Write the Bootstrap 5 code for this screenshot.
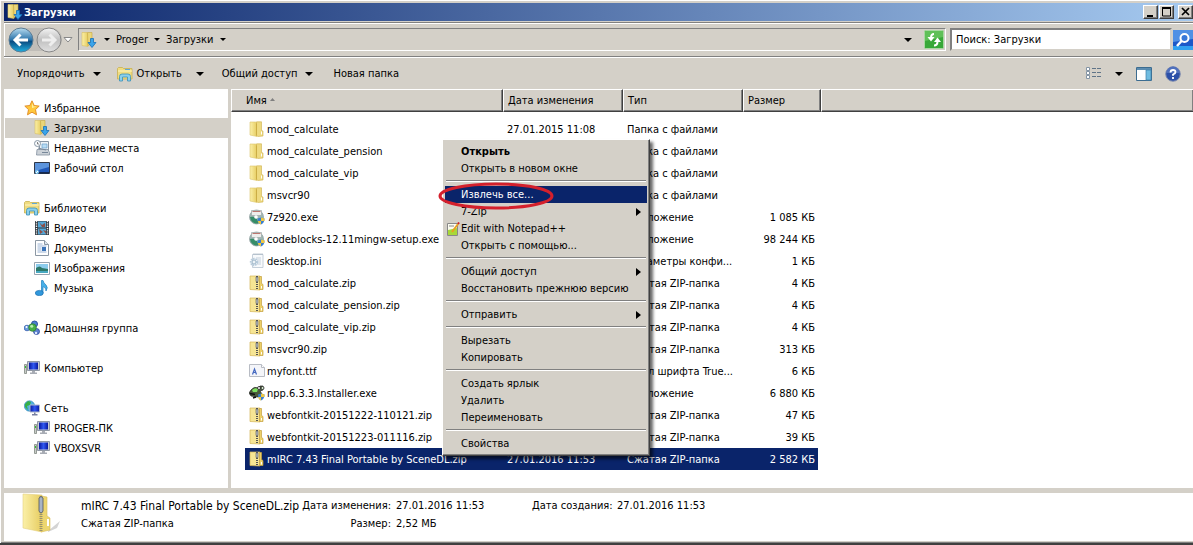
<!DOCTYPE html>
<html lang="ru">
<head>
<meta charset="utf-8">
<meta name="viewport" content="width=device-width, initial-scale=1">
<title>Загрузки</title>
<link href="https://cdn.jsdelivr.net/npm/bootstrap@5.3.0/dist/css/bootstrap.min.css" rel="stylesheet">
<style>
:root { --face: #d4d0c8; --navy: #0a246a; --shade: #808080; --dark: #404040; }
body { font-family: "DejaVu Sans Condensed", "DejaVu Sans", sans-serif; font-size: 11px; line-height: 17px; color: #000; background: var(--face); }
button { font: inherit; color: inherit; }
svg { display: block; flex: none; }
.win { min-height: 100vh; border-bottom: 2px solid var(--dark); box-shadow: inset 1px 1px #fff, inset 0 -1px var(--shade); padding: 3px 0 2px 4px; overflow: hidden; }
.titlebar { height: 18px; background: linear-gradient(90deg, #0a246a, #a6caf0); color: #fff; font-weight: bold; padding-left: 3px; gap: 1px; }
.cap { width: 15px; height: 14px; padding: 0; background: var(--face); border: 1px solid; border-color: #fff var(--dark) var(--dark) #fff; box-shadow: inset -1px -1px var(--shade); }
.cap.shut { margin-left: 3px; }
.navrow { height: 35px; margin-top: 1px; border-top: 1px solid var(--shade); border-bottom: 1px solid var(--shade); box-shadow: inset 1px 1px #fff, 0 1px #fff; padding-left: 4px; }
.plain { background: none; border: 0; padding: 0; }
.address { height: 23px; border: 1px solid; border-color: var(--shade) #fff #fff var(--shade); padding: 0 1px 0 2px; margin-left: 5px; }
.crumbs { gap: 6px; margin-left: 7px; }
.search { width: 222px; height: 23px; margin: 0 1px 0 4px; border: 2px solid; border-color: var(--shade) var(--face) var(--face) var(--shade); padding: 0 4px; background: #fff; font: inherit; color: #000; outline: 0; }
.search::placeholder { color: #000; opacity: 1; }
.tools { height: 31px; margin-top: 1px; padding: 0 12px 0 13px; }
.open-cmd { margin: 0 14px 0 16px; gap: 4px; }
.share-cmd { margin: 0 20px 0 18px; }
.view-cmds { gap: 13px; }
.side { width: 224px; background: #fff; padding-top: 9px; margin-right: 3px; }
.side a { color: #000; text-decoration: none; height: 20px; gap: 4px; padding-left: 19px; margin-left: 1px; }
.side a.sub { padding-left: 29px; }
.side a.current { background: var(--face); }
.side nav { margin-bottom: 20px; }
.files { background: #fff; min-width: 0; }
.files table { table-layout: fixed; width: 100%; border-collapse: separate; border-spacing: 0; }
.files th { height: 23px; font-weight: normal; background: var(--face); border: 1px solid; border-color: #fff var(--dark) var(--dark) #fff; box-shadow: inset -1px -1px var(--shade); padding: 0 4px; }
.files th:first-child { padding-left: 14px; }
.files th:last-child { border-right: 0; }
.files td { height: 22px; padding: 0 4px; white-space: nowrap; overflow: hidden; }
.files td.num { text-align: right; padding: 0; }
.files .head-gap td { height: 6px; }
.files tr.chosen td:not(:first-child):not(:nth-last-child(-n+2)) { background: var(--navy); color: #fff; }
.fname { gap: 2px; }
.c-pad { width: 14px; } .c-name { width: 258px; } .c-col { width: 120px; } .c-size { width: 69px; } .c-end { width: 3px; }
.ctx { position: absolute; left: 211px; top: 50px; width: 208px; padding: 3px 2px; background: var(--face); border: 1px solid; border-color: #fff var(--dark) var(--dark) #fff; box-shadow: inset -1px -1px var(--shade), inset 1px 1px var(--face), 3px 3px 3px rgba(0,0,0,.6); z-index: 5; }
.ctx button { display: flex; align-items: center; width: 100%; height: 17px; padding: 0 6px 0 2px; border: 0; background: none; text-align: left; }
.ctx button.hot { background: var(--navy); color: #fff; }
.ctx .ico { width: 14px; flex: none; }
.ctx hr { margin: 3px 1px 4px; border: 0; border-top: 1px solid var(--shade); border-bottom: 1px solid #fff; height: 2px; opacity: 1; }
.ring { position: absolute; left: -5px; top: 42px; z-index: 6; pointer-events: none; }
.details { background: #fff; margin-top: 5px; height: 48px; padding-left: 17px; gap: 12px; }
.facts { display: grid; grid-template-columns: 215px 90px 131px 80px auto; column-gap: 5px; grid-auto-rows: 18px; align-content: start; padding-top: 4px; white-space: nowrap; }
.facts dt, .facts dd { margin: 0; font-weight: normal; line-height: 18px; }
.facts dt { text-align: right; }
.big { font-size: 12px; }
</style>
</head>
<body>
<svg width="0" height="0" class="position-absolute" aria-hidden="true">
<defs>
<linearGradient id="gy" x2="1"><stop offset="0" stop-color="#fbf0a8"/><stop offset="1" stop-color="#e6cc60"/></linearGradient>
<linearGradient id="gb" x2="0" y2="1"><stop offset="0" stop-color="#b8dcf0"/><stop offset=".5" stop-color="#2a72a8"/><stop offset=".55" stop-color="#0a4a80"/><stop offset="1" stop-color="#20b0e0"/></linearGradient>
<linearGradient id="gg" x2="0" y2="1"><stop offset="0" stop-color="#f4f4f4"/><stop offset=".5" stop-color="#c0c0c0"/><stop offset="1" stop-color="#e0e0e0"/></linearGradient>
<linearGradient id="gs" x2="1"><stop offset="0" stop-color="#0818a0"/><stop offset=".5" stop-color="#3058f0"/><stop offset="1" stop-color="#0818a0"/></linearGradient>
<symbol id="folder" viewBox="0 0 16 16"><path d="M1 1h5.500l1.500 1v13.500L1 14z" fill="url(#gy)" stroke="#dcc468" stroke-width=".6"/><path d="M7.500.800h5v8.700l1.500.5v5l-5 .5-1.500-1z" fill="#eeda80" stroke="#ceb04c" stroke-width=".6"/><path d="M7.500 2.500v12" stroke="#c8a840" stroke-width=".8"/><path d="M12.500 10.500v3" stroke="#fff"/></symbol>
<symbol id="down" viewBox="0 0 16 16"><path d="M1 .500h5l1 1v13l-6-1z" fill="url(#gy)" stroke="#d8bf60" stroke-width=".6"/><path d="M6.500.500H11v11l-4 2z" fill="#ead67a" stroke="#c8a840" stroke-width=".6"/><path d="M9.500 6.500h3v4h2.500L11 15.500 7 10.500h2.500z" fill="#3aa4ea" stroke="#1670b8" stroke-width=".8"/></symbol>
<symbol id="zip" viewBox="0 0 16 16"><path d="M1 1h10v14l-10-.5z" fill="#f6e594" stroke="#d4b458" stroke-width=".7"/><path d="M10.500 1.500h2v7l1.500 1v5h-3.500z" fill="#edd068" stroke="#c4a040" stroke-width=".7"/><path d="M8 1v14" stroke="#555" stroke-width="2" stroke-dasharray="1 1"/><path d="M7 2h2v4.500h-2z" fill="#b8c0c8" stroke="#555" stroke-width=".6"/><path d="M12.500 11v2.500" stroke="#fff"/></symbol>
<symbol id="setup" viewBox="0 0 16 16"><circle cx="7.500" cy="8" r="7" fill="#9cb8b4" stroke="#8a9a9a" stroke-width=".7"/><path d="M1 8a6 6 0 0 1 8 6.500A7 7 0 0 1 1 8z" fill="#358c68"/><path d="M2.500 1.500h10v5h-10z" fill="#eceeec" stroke="#9ca8a8" stroke-width=".7"/><path d="M3.500 2.500h8" stroke="#b05850" stroke-width=".8"/><circle cx="7" cy="8" r="1.800" fill="#fff"/><path d="M8.500 9.500 12 8.500l3.500 1c0 3-1 5-3.500 6-2.500-1-3.500-3-3.500-6z" fill="#3a7ed0"/><path d="M12 8.500l3.500 1V12H12zM12 12v3.500c-1.700-.7-2.700-1.800-3.200-3.500z" fill="#f0c840"/></symbol>
<symbol id="ini" viewBox="0 0 16 16"><path d="M3.500 1.500h10.500v13h-10.500z" fill="#f8fafc" stroke="#b8c4d0" stroke-width=".8"/><path d="M4.500 1h9" stroke="#8898a8" stroke-dasharray="1 1"/><path d="M7 5h5M8 7h4M8 9h4M8 11h4" stroke="#c4d0dc"/><circle cx="5" cy="9" r="3.200" fill="none" stroke="#b8ccdc" stroke-width="2" stroke-dasharray="1.500 .8"/><circle cx="5" cy="9" r="2" fill="#eef4f8" stroke="#9eb6c8"/></symbol>
<symbol id="ttf" viewBox="0 0 16 16"><path d="M.5 1.500h12l3 3v9H.5z" fill="#f4f5f9" stroke="#b8bcc4"/><path d="M12.500 1.500v3h3" fill="#fff" stroke="#b8bcc4"/><path d="M3.500 11.500 5.500 6l2 5.500M4.200 9.500h2.600" fill="none" stroke="#4468c0" stroke-width="1.200"/></symbol>
<symbol id="npp" viewBox="0 0 16 16"><path d="M2 5q3-4 7-2l2-2h3v4l-3 1 2 3-4 3-7-1-2-3z" fill="#4a5a3a" stroke="#222" stroke-width=".7"/><path d="M3 5q3-3 6-1l-1 3H4z" fill="#7ee060"/><circle cx="10" cy="3" r="1.500" fill="#fff" stroke="#222" stroke-width=".8"/><circle cx="13.500" cy="3" r="1.500" fill="#d8f0d0" stroke="#222" stroke-width=".8"/><path d="M1 8.500l5 1M4 13l3-1" stroke="#111" stroke-width="1.500"/><path d="M9 9.500l3-1 3.500 1c0 3-1 5-3.500 6-2-1-3-3-3-6z" fill="#3a7ed0"/><path d="M12 8.500l3.500 1V12H12zM12 12v3.500c-1.700-.7-2.400-1.800-2.800-3.500z" fill="#f0c840"/></symbol>
<symbol id="star" viewBox="0 0 16 16"><path d="M8 .8l2.200 4.700 5 .6-3.700 3.500 1 5.200L8 12.200l-4.500 2.600 1-5.200L.8 6.100l5-.6z" fill="#ffc83c" stroke="#e08820" stroke-width=".9"/><path d="M8 3l1.500 3.500H13L8 8z" fill="#fff0a0"/></symbol>
<symbol id="lib" viewBox="0 0 16 16"><path d="M.5 2.500l1-1h4l1 1h8.500v10.500H.5z" fill="#f0dc80" stroke="#c8b050" stroke-width=".8"/><path d="M1 5h14" stroke="#fff6c0"/><path d="M8 3.500h5" stroke="#60a8d8"/><path d="M2.500 15v-4.500q0-2.500 2.500-2.500h6q2.500 0 2.500 2.500V15h-3v-4h-5v4z" fill="#8cd0ec" stroke="#3a90b8" stroke-width=".8"/></symbol>
<symbol id="recent" viewBox="0 0 16 16"><path d="M5.500 1.500h9v9h-9z" fill="#eef3f7" stroke="#8896a4"/><path d="M8 4h5v4H8z" fill="#b8dcf4" stroke="#6aa0cc" stroke-width=".7"/><path d="M3 9.500h11l1.500 3v2.500h-13z" fill="#ccd2d8" stroke="#8490a0" stroke-width=".8"/><path d="M4 8l8 2M8 12.500h6" stroke="#78889a"/><circle cx="3.500" cy="3.500" r="3" fill="#f8fafc" stroke="#8896a4"/><path d="M3.500 2v2H5" fill="none" stroke="#555" stroke-width=".7"/></symbol>
<symbol id="desk" viewBox="0 0 16 16"><path d="M.5 2.500h15v11H.5z" fill="#2058b8" stroke="#303848"/><path d="M1 3h14v4L1 11z" fill="#5c94dc"/><path d="M1 12.800h14" stroke="#16284c" stroke-width="1.500"/><circle cx="3" cy="12" r="2" fill="#80c8f0"/><path d="M2 13l2-2" stroke="#fff"/></symbol>
<symbol id="video" viewBox="0 0 16 16"><path d="M1 1h14v14H1z" fill="#303840"/><path d="M4 1.500h8v6H4zM4 8.500h8v6H4z" fill="#54a8d8"/><path d="M5 2l3 3 3-2v4H8zM5 9l4 3-3 2zM9 10l3 1v3z" fill="#8c5048"/><path d="M2.500 1v14M13.500 1v14" stroke="#f0f0f0" stroke-width="1.400" stroke-dasharray="1.300 1"/></symbol>
<symbol id="doc" viewBox="0 0 16 16"><path d="M1.500.5h9l4 4v11h-13z" fill="#fff" stroke="#8c98a4"/><path d="M10.500.5v4h4" fill="#dce4ec" stroke="#8c98a4"/><path d="M3.500 4h5M3.500 6h9M3.500 8h4M3.500 10h4M3.500 12h9" stroke="#9cb4d4"/><path d="M8 7h4v4H8z" fill="#3c74b8"/></symbol>
<symbol id="pic" viewBox="0 0 16 16"><path d="M.5 2.500h15v12H.5z" fill="#fff" stroke="#98a4b0"/><path d="M2 4h12v9H2z" fill="#8cccec"/><path d="M2 8q4-3 6 0l6 1v2H2z" fill="#2c7868"/><path d="M2 11h12v2H2z" fill="#48a8c0"/></symbol>
<symbol id="note" viewBox="0 0 16 16"><path d="M7.500 0.500h1.500q.5 2.500 3 4.500 2.500 2.500 0 6 .5-3-3-4.500V13H7.500z" fill="#48b0e8" stroke="#2080c0" stroke-width=".7"/><ellipse cx="5.300" cy="13" rx="4" ry="2.600" fill="#3098dc" stroke="#1c70b0" stroke-width=".7"/></symbol>
<symbol id="home" viewBox="0 0 16 16"><circle cx="10.500" cy="4" r="3" fill="#4c80d0" stroke="#2c50a0"/><circle cx="3" cy="8" r="2.800" fill="#6c9cdc" stroke="#3860b0" stroke-width=".8"/><circle cx="12.500" cy="11.500" r="3" fill="#5c80d0" stroke="#2c4898" stroke-width=".8"/><circle cx="8.500" cy="7.500" r="3.800" fill="#48b048" stroke="#2c7c38" stroke-width=".8"/><circle cx="7.700" cy="6.300" r="1.500" fill="#b8ecb0"/><circle cx="2.500" cy="7" r="1" fill="#fff"/><circle cx="12" cy="13" r="1.200" fill="#dce8fc"/></symbol>
<symbol id="pc" viewBox="0 0 16 16"><path d="M.5 4.500h2v9h-2z" fill="#c8ccc8" stroke="#808880" stroke-width=".8"/><path d="M1 6h1v2H1z" fill="#30c030"/><path d="M3.500 1.500h12v9h-12z" fill="#c8ccd4" stroke="#9098a4"/><path d="M5 2.500h9v7H5z" fill="url(#gs)"/><path d="M8 11h3v1.500h2v1.500H6v-1.500h2z" fill="#a8acb4"/></symbol>
<symbol id="net" viewBox="0 0 16 16"><circle cx="5.500" cy="6" r="5.200" fill="#50b0e0" stroke="#2880b0" stroke-width=".6"/><path d="M1 4l3-3 3 1-1 3-3 1 1 4-3-3zM7 7l3-1v4H7z" fill="#38b048"/><path d="M6 5h9.500v7H6z" fill="url(#gs)" stroke="#b0b8c8"/><path d="M10 12.500h1.500V14h2v1.500H8V14h2z" fill="#7880a0"/></symbol>
<symbol id="tri" viewBox="0 0 8 4"><path d="M0 0h8L4 4z"/></symbol>
<symbol id="rtri" viewBox="0 0 5 8"><path d="M0 0l5 4-5 4z"/></symbol>
</defs>
</svg>

<div class="win d-flex flex-column">
  <header class="titlebar d-flex align-items-center">
    <svg width="16" height="16"><use href="#down"/></svg>
    <span class="flex-grow-1">Загрузки</span>
    <button class="cap" aria-label="Свернуть"><svg width="13" height="12"><path d="M3 9h6v2H3z"/></svg></button>
    <button class="cap" aria-label="Развернуть"><svg width="13" height="12"><path d="M2.500 2v8h8V2z" fill="none" stroke="#000"/><path d="M2 2h9" stroke="#000" stroke-width="2"/></svg></button>
    <button class="cap shut" aria-label="Закрыть"><svg width="13" height="12"><path d="M3 2l7 7M10 2L3 9" stroke="#000" stroke-width="1.700"/></svg></button>
  </header>

  <div class="navrow d-flex align-items-center">
    <button class="plain" aria-label="Назад и вперёд"><svg width="55" height="28"><rect x="4" y="2" width="50" height="23" rx="11" fill="#c0bdb8"/><circle cx="13" cy="14" r="12" fill="url(#gb)" stroke="#5c7c94"/><path d="M20 14H7M12.500 8.500L7 14l5.500 5.500" stroke="#fff" stroke-width="3" fill="none"/><circle cx="41" cy="14" r="12" fill="url(#gg)" stroke="#888"/><path d="M34 14h13M41.500 8.500L47 14l-5.500 5.500" stroke="#eee" stroke-width="3" fill="none"/></svg></button>
    <button class="plain" aria-label="Журнал"><svg width="10" height="6"><path d="M1 .5h8L5 5z" fill="#fff" stroke="#888"/></svg></button>
    <nav class="address d-flex align-items-center flex-grow-1" aria-label="Адрес">
      <svg width="16" height="16"><use href="#down"/></svg>
      <div class="crumbs d-flex align-items-center">
        <svg width="6" height="3"><use href="#tri"/></svg>
        <button class="plain">Proger</button>
        <svg width="6" height="3"><use href="#tri"/></svg>
        <button class="plain">Загрузки</button>
        <svg width="6" height="3"><use href="#tri"/></svg>
      </div>
      <svg class="ms-auto me-2" width="8" height="4"><use href="#tri"/></svg>
      <button class="plain ms-1" aria-label="Обновить"><svg width="20" height="19"><rect x=".5" y=".5" width="19" height="18" rx="1" fill="#38a838" stroke="#a8d8a0"/><path d="M1 1h18v6L1 11z" fill="#60c058"/><path d="M10 4Q7 4 7 8" fill="none" stroke="#fff" stroke-width="2"/><path d="M3.500 7h7L7 11.500z" fill="#fff"/><path d="M10 15.500q3.500 0 3.500-4" fill="none" stroke="#fff" stroke-width="2"/><path d="M10 12h7l-3.500-4.500z" fill="#fff"/></svg></button>
    </nav>
    <input class="search" type="search" placeholder="Поиск: Загрузки" aria-label="Поиск">
    <button class="plain" aria-label="Найти"><svg width="20" height="20"><rect width="20" height="20" rx="1" fill="#1c58c8"/><path d="M0 0h20v9L0 12z" fill="#5090e4"/><path d="M0 16h20v4H0z" fill="#30a0f0"/><circle cx="11.500" cy="8" r="4" fill="#3878d8" stroke="#fff" stroke-width="2"/><path d="M8.500 11L4 16" stroke="#fff" stroke-width="2.500"/></svg></button>
  </div>

  <div class="tools d-flex align-items-center">
    <button class="plain d-flex align-items-center gap-2">Упорядочить<svg width="8" height="4"><use href="#tri"/></svg></button>
    <button class="plain d-flex align-items-center open-cmd"><svg width="16" height="16"><use href="#lib"/></svg>Открыть</button>
    <button class="plain" aria-label="Ещё"><svg width="8" height="4"><use href="#tri"/></svg></button>
    <button class="plain d-flex align-items-center gap-2 share-cmd">Общий доступ<svg width="8" height="4"><use href="#tri"/></svg></button>
    <button class="plain me-auto">Новая папка</button>
    <div class="view-cmds d-flex align-items-center">
      <button class="plain" aria-label="Вид"><svg width="16" height="13"><path d="M.5.500h3v3h-3zM.5 4.500h3v3h-3zM.5 8.500h3v3h-3z" fill="#fff" stroke="#8494a4"/><path d="M6 1.500h4M11 1.500h4M6 5.500h4M11 5.500h4M6 9.500h4M11 9.500h4" stroke="#607488"/></svg></button>
      <button class="plain" aria-label="Выбор вида"><svg width="8" height="4"><use href="#tri"/></svg></button>
      <button class="plain" aria-label="Область просмотра"><svg width="16" height="14"><path d="M.5.500h15v13H.5z" fill="#fff" stroke="#3c6c90"/><path d="M1 2h14" stroke="#5c8cb0" stroke-width="2"/><path d="M10 3h5v10h-5z" fill="#70bce0" stroke="#3c80a8" stroke-width=".7"/></svg></button>
      <button class="plain" aria-label="Справка"><svg width="16" height="16"><circle cx="8" cy="8" r="7.300" fill="#2c50a8" stroke="#8490b0"/><path d="M1.500 7a6.500 6.500 0 0 1 13 0z" fill="#5070bc"/><path d="M5.500 6.500q0-2.500 2.500-2.500t2.500 2Q10.500 7.500 8 8.500v1.200M8 11v2" fill="none" stroke="#fff" stroke-width="1.800"/></svg></button>
    </div>
  </div>

  <div class="d-flex flex-grow-1">
    <aside class="side flex-shrink-0">
      <nav><a href="#" class="d-flex align-items-center"><svg width="16" height="16"><use href="#star"/></svg>Избранное</a>
        <a href="#" class="d-flex align-items-center sub current"><svg width="16" height="16"><use href="#down"/></svg>Загрузки</a>
        <a href="#" class="d-flex align-items-center sub"><svg width="16" height="16"><use href="#recent"/></svg>Недавние места</a>
        <a href="#" class="d-flex align-items-center sub"><svg width="16" height="16"><use href="#desk"/></svg>Рабочий стол</a></nav>
      <nav><a href="#" class="d-flex align-items-center"><svg width="16" height="16"><use href="#lib"/></svg>Библиотеки</a>
        <a href="#" class="d-flex align-items-center sub"><svg width="16" height="16"><use href="#video"/></svg>Видео</a>
        <a href="#" class="d-flex align-items-center sub"><svg width="16" height="16"><use href="#doc"/></svg>Документы</a>
        <a href="#" class="d-flex align-items-center sub"><svg width="16" height="16"><use href="#pic"/></svg>Изображения</a>
        <a href="#" class="d-flex align-items-center sub"><svg width="16" height="16"><use href="#note"/></svg>Музыка</a></nav>
      <nav><a href="#" class="d-flex align-items-center"><svg width="16" height="16"><use href="#home"/></svg>Домашняя группа</a></nav>
      <nav><a href="#" class="d-flex align-items-center"><svg width="16" height="16"><use href="#pc"/></svg>Компьютер</a></nav>
      <nav><a href="#" class="d-flex align-items-center"><svg width="16" height="16"><use href="#net"/></svg>Сеть</a>
        <a href="#" class="d-flex align-items-center sub"><svg width="16" height="16"><use href="#pc"/></svg>PROGER-ПК</a>
        <a href="#" class="d-flex align-items-center sub"><svg width="16" height="16"><use href="#pc"/></svg>VBOXSVR</a></nav>
    </aside>

    <main class="files flex-grow-1 position-relative">
      <table>
        <colgroup><col class="c-pad"><col class="c-name"><col class="c-col"><col class="c-col"><col class="c-size"><col class="c-end"><col class="c-end"><col class="c-end"><col></colgroup>
        <thead><tr><th colspan="2">Имя <svg class="d-inline-block align-middle mb-1 ms-px" width="5" height="3"><path d="M0 3h5L2.500 0z" fill="#808080"/></svg></th><th>Дата изменения</th><th>Тип</th><th colspan="4">Размер</th><th></th></tr></thead>
        <tbody>
        <tr class="head-gap"><td colspan="9"></td></tr>
        <tr><td></td><td><div class="fname d-flex align-items-center"><svg width="16" height="16"><use href="#folder"/></svg>mod_calculate</div></td><td>27.01.2015 11:08</td><td>Папка с файлами</td><td class="num" colspan="2"></td><td></td><td></td><td></td></tr>
        <tr><td></td><td><div class="fname d-flex align-items-center"><svg width="16" height="16"><use href="#folder"/></svg>mod_calculate_pension</div></td><td></td><td>Папка с файлами</td><td class="num" colspan="2"></td><td></td><td></td><td></td></tr>
        <tr><td></td><td><div class="fname d-flex align-items-center"><svg width="16" height="16"><use href="#folder"/></svg>mod_calculate_vip</div></td><td></td><td>Папка с файлами</td><td class="num" colspan="2"></td><td></td><td></td><td></td></tr>
        <tr><td></td><td><div class="fname d-flex align-items-center"><svg width="16" height="16"><use href="#folder"/></svg>msvcr90</div></td><td></td><td>Папка с файлами</td><td class="num" colspan="2"></td><td></td><td></td><td></td></tr>
        <tr><td></td><td><div class="fname d-flex align-items-center"><svg width="16" height="16"><use href="#setup"/></svg>7z920.exe</div></td><td></td><td>Приложение</td><td class="num" colspan="2">1 085 КБ</td><td></td><td></td><td></td></tr>
        <tr><td></td><td><div class="fname d-flex align-items-center"><svg width="16" height="16"><use href="#setup"/></svg>codeblocks-12.11mingw-setup.exe</div></td><td></td><td>Приложение</td><td class="num" colspan="2">98 244 КБ</td><td></td><td></td><td></td></tr>
        <tr><td></td><td><div class="fname d-flex align-items-center"><svg width="16" height="16"><use href="#ini"/></svg>desktop.ini</div></td><td></td><td>Параметры конфи...</td><td class="num" colspan="2">1 КБ</td><td></td><td></td><td></td></tr>
        <tr><td></td><td><div class="fname d-flex align-items-center"><svg width="16" height="16"><use href="#zip"/></svg>mod_calculate.zip</div></td><td></td><td>Сжатая ZIP-папка</td><td class="num" colspan="2">4 КБ</td><td></td><td></td><td></td></tr>
        <tr><td></td><td><div class="fname d-flex align-items-center"><svg width="16" height="16"><use href="#zip"/></svg>mod_calculate_pension.zip</div></td><td></td><td>Сжатая ZIP-папка</td><td class="num" colspan="2">4 КБ</td><td></td><td></td><td></td></tr>
        <tr><td></td><td><div class="fname d-flex align-items-center"><svg width="16" height="16"><use href="#zip"/></svg>mod_calculate_vip.zip</div></td><td></td><td>Сжатая ZIP-папка</td><td class="num" colspan="2">4 КБ</td><td></td><td></td><td></td></tr>
        <tr><td></td><td><div class="fname d-flex align-items-center"><svg width="16" height="16"><use href="#zip"/></svg>msvcr90.zip</div></td><td></td><td>Сжатая ZIP-папка</td><td class="num" colspan="2">313 КБ</td><td></td><td></td><td></td></tr>
        <tr><td></td><td><div class="fname d-flex align-items-center"><svg width="16" height="16"><use href="#ttf"/></svg>myfont.ttf</div></td><td></td><td>Файл шрифта True...</td><td class="num" colspan="2">6 КБ</td><td></td><td></td><td></td></tr>
        <tr><td></td><td><div class="fname d-flex align-items-center"><svg width="16" height="16"><use href="#npp"/></svg>npp.6.3.3.Installer.exe</div></td><td></td><td>Приложение</td><td class="num" colspan="2">6 880 КБ</td><td></td><td></td><td></td></tr>
        <tr><td></td><td><div class="fname d-flex align-items-center"><svg width="16" height="16"><use href="#zip"/></svg>webfontkit-20151222-110121.zip</div></td><td></td><td>Сжатая ZIP-папка</td><td class="num" colspan="2">47 КБ</td><td></td><td></td><td></td></tr>
        <tr><td></td><td><div class="fname d-flex align-items-center"><svg width="16" height="16"><use href="#zip"/></svg>webfontkit-20151223-011116.zip</div></td><td></td><td>Сжатая ZIP-папка</td><td class="num" colspan="2">39 КБ</td><td></td><td></td><td></td></tr>
        <tr class="chosen"><td></td><td><div class="fname d-flex align-items-center"><svg width="16" height="16"><use href="#zip"/></svg>mIRC 7.43 Final Portable by SceneDL.zip</div></td><td>27.01.2016 11:53</td><td>Сжатая ZIP-папка</td><td class="num" colspan="2">2 582 КБ</td><td></td><td></td><td></td></tr>
        </tbody>
      </table>

      <div class="ctx" role="menu">
        <button class="fw-bold"><span class="ico"></span>Открыть</button>
        <button><span class="ico"></span>Открыть в новом окне</button>
        <hr>
        <button class="hot"><span class="ico"></span>Извлечь все...</button>
        <button><span class="ico"></span>7-Zip<svg class="ms-auto" width="5" height="8"><use href="#rtri"/></svg></button>
        <button><span class="ico"><svg width="13" height="14"><path d="M.5 1.500h10v12H.5z" fill="#fcfcf0" stroke="#888"/><path d="M1 8l9-2v7H1z" fill="#a8d838"/><path d="M2 4h5" stroke="#888"/><path d="M5 10l6-8" stroke="#e8a020" stroke-width="2"/><path d="M11 2l1-1.500" stroke="#d02020" stroke-width="2"/></svg></span>Edit with Notepad++</button>
        <button><span class="ico"></span>Открыть с помощью...</button>
        <hr>
        <button><span class="ico"></span>Общий доступ<svg class="ms-auto" width="5" height="8"><use href="#rtri"/></svg></button>
        <button><span class="ico"></span>Восстановить прежнюю версию</button>
        <hr>
        <button><span class="ico"></span>Отправить<svg class="ms-auto" width="5" height="8"><use href="#rtri"/></svg></button>
        <hr>
        <button><span class="ico"></span>Вырезать</button>
        <button><span class="ico"></span>Копировать</button>
        <hr>
        <button><span class="ico"></span>Создать ярлык</button>
        <button><span class="ico"></span>Удалить</button>
        <button><span class="ico"></span>Переименовать</button>
        <hr>
        <button><span class="ico"></span>Свойства</button>
        <svg class="ring" width="118" height="28"><ellipse cx="58" cy="14" rx="56" ry="12" fill="none" stroke="#d4202c" stroke-width="3"/></svg>
      </div>
    </main>
  </div>

  <footer class="details d-flex">
    <svg width="40" height="42" viewBox="0 0 40 42"><path d="M27 38l12-10-3 7-9 4z" fill="#d4d4d4"/><path d="M2 1l19 1v37L2 35z" fill="url(#gy)" stroke="#e4d080" stroke-width=".6"/><path d="M20 3l6 1v19l3 2v12l-9 2z" fill="#ecd670" stroke="#d8bc58" stroke-width=".6"/><path d="M20 3v36" stroke="#9a9470" stroke-width="3" stroke-dasharray="1 1"/><path d="M18 5q2-3 4 0v13q-2 4-4 0z" fill="#a8b4c4" stroke="#4c5460" stroke-width=".8"/><path d="M27 26v7" stroke="#fff" stroke-width="2"/></svg>
    <dl class="facts mb-0 ms-2">
      <dd class="big">mIRC 7.43 Final Portable by SceneDL.zip</dd><dt>Дата изменения:</dt><dd>27.01.2016 11:53</dd><dt>Дата создания:</dt><dd>27.01.2016 11:53</dd>
      <dd>Сжатая ZIP-папка</dd><dt>Размер:</dt><dd>2,52 МБ</dd>
    </dl>
  </footer>
</div>
<script src="https://cdn.jsdelivr.net/npm/bootstrap@5.3.0/dist/js/bootstrap.bundle.min.js"></script>
</body>
</html>
